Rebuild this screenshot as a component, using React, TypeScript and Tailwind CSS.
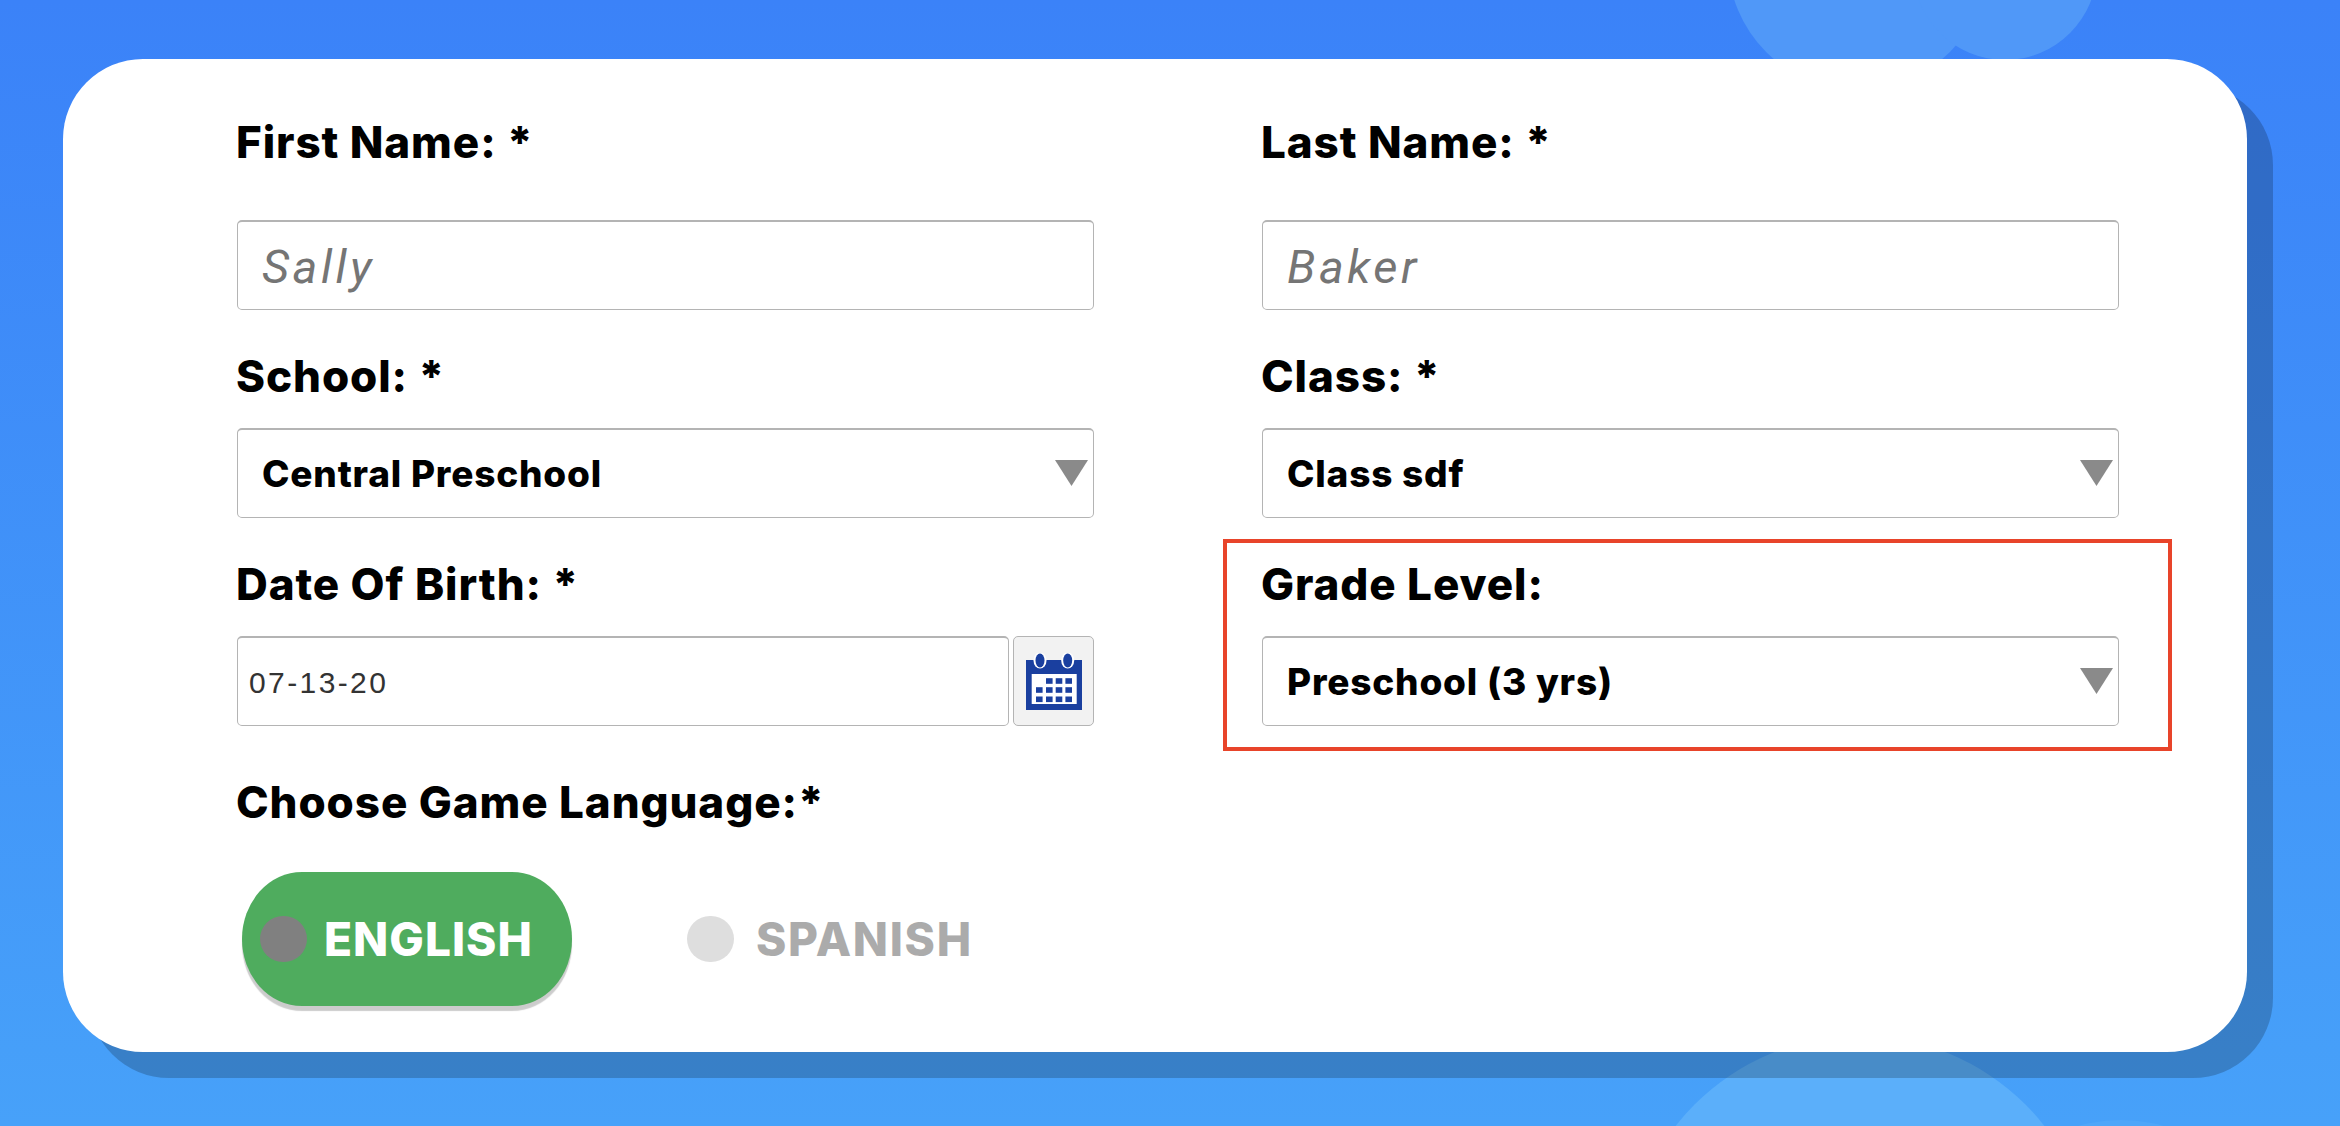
import type { ReactNode } from "react";

const labelFont = "[font-family:Inter,sans-serif]";

function Label({ children }: { children: ReactNode }) {
  return <div className={`h-[60px] text-[44px] leading-[60px] font-extrabold tracking-[0.9px] text-black ${labelFont}`}>{children}</div>;
}

function TextInput({ placeholder }: { placeholder: string }) {
  return (
    <input
      placeholder={placeholder}
      className="h-[90px] w-full rounded-[5px] border border-t-2 border-[#b4b4b4] bg-white px-[24px] pt-[2px] text-[47px] tracking-[3.5px] [font-family:Roboto,sans-serif] outline-none placeholder:text-[#757575] placeholder:italic"
    />
  );
}

function Select({ value }: { value: string }) {
  return (
    <div className="relative h-[90px] w-full">
      <select
        defaultValue={value}
        className="h-full w-full appearance-none rounded-[5px] border border-t-2 border-[#b4b4b4] bg-white pl-[24px] text-[37px] font-extrabold tracking-[0.8px] text-black [font-family:Inter,sans-serif] outline-none"
      >
        <option>{value}</option>
      </select>
      <svg className="pointer-events-none absolute right-[6px] top-[32px] h-[26px] w-[33px]" viewBox="0 0 33 26">
        <path d="M0 0H33L16.5 26Z" fill="#8a8a8a" />
      </svg>
    </div>
  );
}

function CalendarIcon() {
  const cols = [13.3, 23.3, 33, 42.7];
  const rows = [28, 37, 46.3];
  return (
    <svg width="56" height="57" viewBox="0 0 56 57">
      <rect x="0" y="7" width="56" height="50" fill="#1a3f9f" />
      <rect x="5.7" y="21" width="45" height="30" fill="#fff" />
      {[14, 41.7].map((cx) => (
        <g key={cx}>
          <ellipse cx={cx} cy="7.5" rx="6.5" ry="8" fill="#fff" />
          <ellipse cx={cx} cy="7.5" rx="4.5" ry="7" fill="#1a3f9f" />
        </g>
      ))}
      {rows.map((cy, r) =>
        cols.map((cx, c) =>
          r === 0 && c === 0 ? null : (
            <rect key={`${r}-${c}`} x={cx - 3.3} y={cy - 2.8} width="6.6" height="5.6" fill="#1a3f9f" />
          ),
        ),
      )}
    </svg>
  );
}

export default function App() {
  return (
    <div className="relative h-[1126px] w-[2340px] overflow-hidden bg-gradient-to-b from-[#3b82f8] to-[#47a1f9] pl-[63px] pt-[59px]">
      {/* background blobs */}
      <div className="absolute left-[1728px] top-[-170px] h-[260px] w-[260px] rounded-full bg-[#5098f8]" />
      <div className="absolute left-[1913px] top-[-124px] h-[184px] w-[184px] rounded-full bg-[#5098f8]" />
      <div className="absolute left-[1626px] top-[1036px] h-[468px] w-[468px] rounded-full bg-[#5bafFA]" />
      <div className="absolute left-[1964px] top-[1120px] h-[314px] w-[314px] rounded-full bg-[#4fa6f9]" />

      <div className="relative h-[993px] w-[2184px] rounded-[80px] bg-white pl-[173px] pt-[53px] shadow-[26px_26px_0_rgba(0,0,0,0.2)]">
        <div className="grid w-[1883px] grid-cols-[858px_858px] gap-x-[167px]">
          <div>
            <Label>First Name: *</Label>
            <div className="mt-[48px] pl-[1px]">
              <TextInput placeholder="Sally" />
            </div>
          </div>
          <div>
            <Label>Last Name: *</Label>
            <div className="mt-[48px] pl-[1px]">
              <TextInput placeholder="Baker" />
            </div>
          </div>

          <div className="mt-[36px]">
            <Label>School: *</Label>
            <div className="mt-[22px] pl-[1px]">
              <Select value="Central Preschool" />
            </div>
          </div>
          <div className="mt-[36px]">
            <Label>Class: *</Label>
            <div className="mt-[22px] pl-[1px]">
              <Select value="Class sdf" />
            </div>
          </div>

          <div className="mt-[36px]">
            <Label>Date Of Birth: *</Label>
            <div className="mt-[22px] flex gap-[4px] pl-[1px]">
              <input
                defaultValue="07-13-20"
                className="h-[90px] w-[772px] rounded-[5px] border border-t-2 border-[#b4b4b4] bg-white pl-[11px] pt-[2px] text-[30px] tracking-[2.4px] text-[#333] [font-family:'Liberation_Sans',sans-serif] outline-none"
              />
              <button className="flex h-[90px] w-[81px] items-center justify-center rounded-[5px] border border-[#b4b4b4] bg-[#f2f2f2]">
                <CalendarIcon />
              </button>
            </div>
          </div>
          <div className="relative mt-[36px]">
            <Label>Grade Level:</Label>
            <div className="mt-[22px] pl-[1px]">
              <Select value="Preschool (3 yrs)" />
            </div>
            {/* callout around this field */}
            <div className="pointer-events-none absolute bottom-[-25px] left-[-38px] right-[-53px] top-[-15px] border-[4px] border-[#e8442a]" />
          </div>
        </div>

        <div className="mt-[46px]">
          <Label>Choose Game Language:*</Label>
        </div>
        <div className={`mt-[40px] flex items-center text-[46px] font-extrabold tracking-[1px] ${labelFont}`}>
          <div className="ml-[6px] flex h-[134px] w-[330px] items-center gap-[17px] rounded-[60px/67px] bg-[#4fac5e] pl-[18px] text-white shadow-[0_5px_1px_rgba(0,0,0,0.2)]">
            <span className="h-[46px] w-[47px] rounded-full bg-[#808080]" />
            ENGLISH
          </div>
          <div className="ml-[115px] flex items-center gap-[22px] tracking-[1.7px] text-[#ababab]">
            <span className="h-[46px] w-[47px] rounded-full bg-[#dedede]" />
            SPANISH
          </div>
        </div>
      </div>
    </div>
  );
}
